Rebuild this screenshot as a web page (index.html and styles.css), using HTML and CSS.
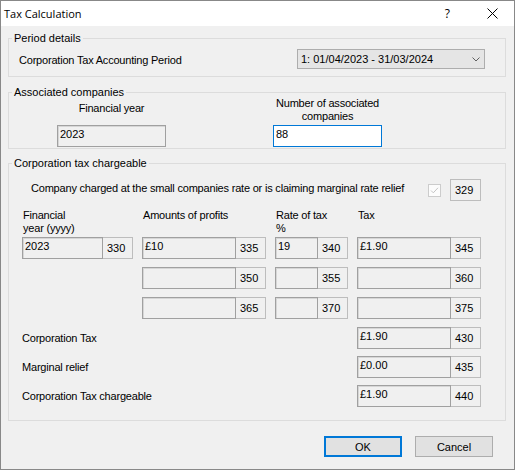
FILE: index.html
```html
<!DOCTYPE html>
<html lang="en">
<head>
<meta charset="utf-8">
<title>Tax Calculation</title>
<link rel="stylesheet" href="styles.css">
</head>
<body>
<div class="window">
  <div class="titlebar">
    <span class="title">Tax Calculation</span>
    <span class="help">?</span>
    <span class="close">
      <svg width="11" height="11" viewBox="0 0 11 11"><path d="M0.5 0.5 L10.5 10.5 M10.5 0.5 L0.5 10.5" stroke="#000" stroke-width="1" fill="none"/></svg>
    </span>
  </div>

  <div class="dialog">
    <fieldset class="group period">
      <legend>Period details</legend>
      <div class="period-row">
        <span class="period-label">Corporation Tax Accounting Period</span>
        <div class="combo">
          <span>1: 01/04/2023 - 31/03/2024</span>
          <svg class="chevron" width="8" height="5" viewBox="0 0 8 5"><path d="M0.5 0.5 L4 4 L7.5 0.5" stroke="#606060" stroke-width="1" fill="none"/></svg>
        </div>
      </div>
    </fieldset>

    <fieldset class="group assoc">
      <legend>Associated companies</legend>
      <div class="assoc-grid">
        <span class="assoc-label single">Financial year</span>
        <span class="assoc-label">Number of associated<br>companies</span>
        <div class="field">2023</div>
        <div class="field editable">88</div>
      </div>
    </fieldset>

    <fieldset class="group ct">
      <legend>Corporation tax chargeable</legend>
      <div class="ct-body">
        <div class="small-rate">
          <span class="small-rate-label">Company charged at the small companies rate or is claiming marginal rate relief</span>
          <span class="check">
            <svg width="13" height="13" viewBox="0 0 13 13"><rect x="0.5" y="0.5" width="12" height="12" fill="#fcfcfc" stroke="#cccccc"/><path d="M3 6.5 L5.3 8.8 L10 3.8" stroke="#c4c4c4" stroke-width="1" fill="none"/></svg>
          </span>
          <span class="num solo">329</span>
        </div>

        <div class="cols heads">
          <span>Financial<br>year (yyyy)</span>
          <span>Amounts of profits</span>
          <span>Rate of tax<br>%</span>
          <span>Tax</span>
        </div>

        <div class="cols rows">
          <div class="cell"><div class="field">2023</div><span class="num">330</span></div>
          <div class="cell"><div class="field">£10</div><span class="num">335</span></div>
          <div class="cell"><div class="field">19</div><span class="num">340</span></div>
          <div class="cell"><div class="field">£1.90</div><span class="num">345</span></div>

          <div class="cell c2"><div class="field"></div><span class="num">350</span></div>
          <div class="cell"><div class="field"></div><span class="num">355</span></div>
          <div class="cell"><div class="field"></div><span class="num">360</span></div>

          <div class="cell c2"><div class="field"></div><span class="num">365</span></div>
          <div class="cell"><div class="field"></div><span class="num">370</span></div>
          <div class="cell"><div class="field"></div><span class="num">375</span></div>
        </div>

        <div class="cols totals">
          <span class="total-label">Corporation Tax</span>
          <div class="cell c4"><div class="field">£1.90</div><span class="num">430</span></div>
          <span class="total-label">Marginal relief</span>
          <div class="cell c4"><div class="field">£0.00</div><span class="num">435</span></div>
          <span class="total-label">Corporation Tax chargeable</span>
          <div class="cell c4"><div class="field">£1.90</div><span class="num">440</span></div>
        </div>
      </div>
    </fieldset>

    <div class="buttons">
      <button class="btn default">OK</button>
      <button class="btn">Cancel</button>
    </div>
  </div>
</div>
</body>
</html>
```

FILE: styles.css
```css
html, body {
  margin: 0;
  padding: 0;
  background: #ffffff;
}

.window {
  width: 515px;
  height: 470px;
  box-sizing: border-box;
  border: 1px solid #888888;
  background: #f0f0f0;
  display: flex;
  flex-direction: column;
  font-family: "Liberation Sans", Arial, sans-serif;
  font-size: 11px;
  line-height: 13px;
  color: #000000;
}

/* Title bar */
.titlebar {
  height: 25px;
  flex: none;
  background: #ffffff;
  display: flex;
  align-items: center;
  font-family: "Open Sans", "Noto Sans", sans-serif;
  font-size: 11px;
}

.title {
  padding-left: 3px;
}

.help {
  margin-left: auto;
  margin-right: 37px;
  font-size: 12px;
}

.close {
  display: flex;
  margin-right: 16px;
}

/* Dialog content */
.dialog {
  flex: 1;
  display: flex;
  flex-direction: column;
  padding: 6px 8px 0 7px;
}

.group {
  margin: 0;
  padding: 0;
  min-width: 0;
  border: 1px solid #dcdcdc;
}

.group legend {
  margin-left: 3px;
  padding: 0 2px;
  line-height: 13px;
}

.assoc {
  margin-top: 9px;
}

.ct {
  margin-top: 8px;
}

/* Static labels are set slightly tighter than the legends */
.period-label,
.assoc-label,
.small-rate-label,
.heads,
.total-label {
  letter-spacing: -0.2px;
}

/* Period details */
.period-row {
  display: flex;
  align-items: center;
  padding: 4px 20px 7px 10px;
}

.period-label {
  margin-top: 3px;
}

.combo {
  margin-left: auto;
  width: 188px;
  height: 20px;
  box-sizing: border-box;
  border: 1px solid #adadad;
  background: #e5e5e5;
  display: flex;
  align-items: center;
  padding-left: 3px;
}

.chevron {
  margin-left: auto;
  margin-right: 4px;
}

/* Read-only and editable text boxes */
.field {
  box-sizing: border-box;
  height: 22px;
  border: 1px solid #a0a0a0;
  box-shadow: inset 1px 1px 0 #d6d6d6;
  background: #f0f0f0;
  padding: 2px 2px 0 2px;
  line-height: 13px;
  white-space: nowrap;
}

.field.editable {
  background: #ffffff;
  border-color: #0078d7;
  box-shadow: none;
}

/* Associated companies */
.assoc-grid {
  display: grid;
  grid-template-columns: 109px 109px;
  grid-template-rows: 26px 22px;
  column-gap: 107px;
  row-gap: 2px;
  margin-top: -2px;
  padding: 0 0 1px 48px;
}

.assoc-label {
  text-align: center;
  align-self: center;
  white-space: nowrap;
}

.assoc-label.single {
  margin-bottom: 4px;
}

/* Corporation tax chargeable */
.ct-body {
  padding: 9px 24px 13px 13px;
}

.small-rate {
  display: flex;
  align-items: center;
  height: 22px;
  padding-left: 9px;
}

.small-rate-label {
  margin-bottom: 3px;
}

.check {
  display: flex;
  margin-left: auto;
  margin-right: 9px;
}

.num {
  box-sizing: border-box;
  width: 30px;
  height: 22px;
  flex: none;
  border: 1px solid #bdbdbd;
  border-left: none;
  background: #f0f0f0;
  padding-left: 4px;
  line-height: 20px;
}

.num.solo {
  width: 31px;
  border-left: 1px solid #bdbdbd;
}

.cols {
  display: grid;
  grid-template-columns: 111px 124px 73px 124px;
  column-gap: 9px;
}

.heads {
  margin-top: 8px;
  margin-bottom: 2px;
  height: 26px;
}

.heads span {
  padding-left: 1px;
}

.rows {
  row-gap: 8px;
}

.totals {
  margin-top: 8px;
  row-gap: 7px;
}

.cell {
  display: flex;
  height: 22px;
}

.cell .field {
  flex: 1;
  min-width: 0;
}

.cell.c2 {
  grid-column: 2;
}

.cell.c4 {
  grid-column: 4;
}

.total-label {
  grid-column: 1 / 4;
  align-self: center;
}

/* Buttons */
.buttons {
  display: flex;
  justify-content: flex-end;
  gap: 13px;
  margin-top: 15px;
  padding-right: 13px;
}

.btn {
  width: 78px;
  height: 21px;
  box-sizing: border-box;
  margin: 0;
  padding: 0;
  border: 1px solid #adadad;
  background: #e1e1e1;
  font-family: "Liberation Sans", Arial, sans-serif;
  font-size: 11px;
  color: #000000;
}

.btn.default {
  border-color: #0078d7;
  box-shadow: inset 0 0 0 1px #0078d7;
}
```
